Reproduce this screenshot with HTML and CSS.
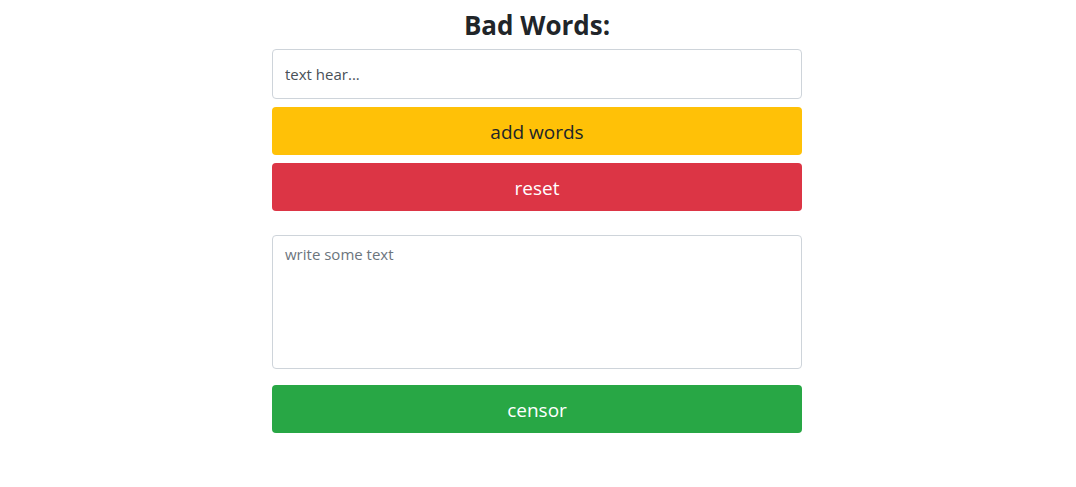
FILE: index.html
```html
<!DOCTYPE html>
<html>
<head>
<meta charset="utf-8">
<link rel="stylesheet" href="styles.css">
</head>
<body>
<main class="wrap">
  <h2 class="title">Bad Words:</h2>
  <input class="field" type="text" value="text hear...">
  <button class="btn btn-warning">add words</button>
  <button class="btn btn-danger">reset</button>
  <textarea class="area" placeholder="write some text"></textarea>
  <button class="btn btn-success">censor</button>
</main>
</body>
</html>
```
FILE: styles.css
```css
html, body {
  margin: 0;
  background: #fff;
  font-family: "Open Sans", "Noto Sans", sans-serif;
  color: #212529;
}
.wrap {
  width: 530px;
  margin: 0 auto;
  padding: 8px 2px 0 0;
  display: flex;
  flex-direction: column;
}
.title {
  margin: 0 0 7px;
  font-size: 26px;
  line-height: 34px;
  font-weight: 700;
  text-align: center;
}
.field, .area {
  box-sizing: border-box;
  width: 100%;
  border: 1px solid #ced4da;
  border-radius: 4px;
  font-family: inherit;
  font-size: 15px;
  padding: 6px 12px;
  color: #495057;
  outline: none;
  margin: 0;
}
.field {
  height: 50px;
}
.area {
  height: 134px;
  resize: none;
  margin-top: 24px;
  padding-top: 8px;
  display: block;
}
.area::placeholder {
  color: #6c757d;
}
.btn {
  box-sizing: border-box;
  width: 100%;
  height: 48px;
  border: 0;
  border-radius: 4px;
  font-family: inherit;
  font-size: 19px;
  margin-top: 8px;
  padding: 2px 0 0;
}
.btn-warning { background: #ffc107; color: #212529; }
.btn-danger { background: #dc3545; color: #fff; }
.btn-success { background: #28a745; color: #fff; margin-top: 16px; }
```
